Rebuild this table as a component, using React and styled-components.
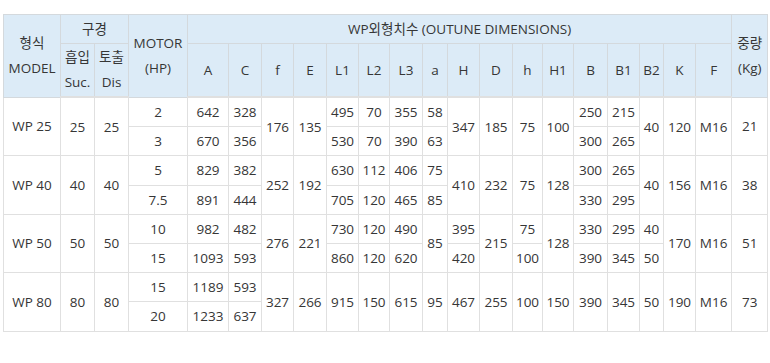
import React from "react";
import styled, { createGlobalStyle } from "styled-components";

const Global = createGlobalStyle`
  html, body { margin: 0; padding: 0; background: #fff; }
  body { font-family: "Open Sans", "Noto Sans CJK KR", sans-serif; color: #363636; }
`;

const Wrap = styled.div`
  padding: 14px 3px 0 3px;
`;

const Table = styled.table`
  border-collapse: collapse;
  table-layout: fixed;
  width: 764px;
  font-size: 13.5px;
  font-family: "Open Sans", "Noto Sans CJK KR", sans-serif;
  color: #363636;
`;

const Th = styled.th`
  background: #dcebf7;
  font-weight: 400;
  border: 1px solid #d4d9dd;
  text-align: center;
  vertical-align: middle;
  padding: 0;
  line-height: 25px;
  height: ${(p) => p.$h || "auto"};
  white-space: nowrap;
  font-family: "Open Sans", "Noto Sans CJK KR", sans-serif;
`;

const Td = styled.td`
  border: 1px solid #e0e0e0;
  text-align: center;
  vertical-align: middle;
  padding: 0;
  height: 28.2px;
  white-space: nowrap;
`;

const THead = styled.thead`
  tr:last-child th { border-bottom: 2px solid #e0e0e0; }
`;

const widths = [57, 34, 34, 59, 41, 33, 32, 33, 32, 31, 33, 25, 32, 33, 30, 31, 34, 32, 24, 32, 36, 36];
const dims = ["A", "C", "f", "E", "L1", "L2", "L3", "a", "H", "D", "h", "H1", "B", "B1", "B2", "K", "F"];

// cell spec: value, or [value, rowspan]
const body = [
  [["WP 25", 2], ["25", 2], ["25", 2], "2", "642", "328", ["176", 2], ["135", 2], "495", "70", "355", "58", ["347", 2], ["185", 2], ["75", 2], ["100", 2], "250", "215", ["40", 2], ["120", 2], ["M16", 2], ["21", 2]],
  ["3", "670", "356", "530", "70", "390", "63", "300", "265"],
  [["WP 40", 2], ["40", 2], ["40", 2], "5", "829", "382", ["252", 2], ["192", 2], "630", "112", "406", "75", ["410", 2], ["232", 2], ["75", 2], ["128", 2], "300", "265", ["40", 2], ["156", 2], ["M16", 2], ["38", 2]],
  ["7.5", "891", "444", "705", "120", "465", "85", "330", "295"],
  [["WP 50", 2], ["50", 2], ["50", 2], "10", "982", "482", ["276", 2], ["221", 2], "730", "120", "490", ["85", 2], "395", ["215", 2], "75", ["128", 2], "330", "295", "40", ["170", 2], ["M16", 2], ["51", 2]],
  ["15", "1093", "593", "860", "120", "620", "420", "100", "390", "345", "50"],
  [["WP 80", 2], ["80", 2], ["80", 2], "15", "1189", "593", ["327", 2], ["266", 2], ["915", 2], ["150", 2], ["615", 2], ["95", 2], ["467", 2], ["255", 2], ["100", 2], ["150", 2], ["390", 2], ["345", 2], ["50", 2], ["190", 2], ["M16", 2], ["73", 2]],
  ["20", "1233", "637"],
];

export default function App() {
  return (
    <>
      <Global />
      <Wrap>
        <Table>
          <colgroup>
            {widths.map((w, i) => (
              <col key={i} style={{ width: w }} />
            ))}
          </colgroup>
          <THead>
            <tr>
              <Th rowSpan={2}>형식<br />MODEL</Th>
              <Th colSpan={2} $h="28px">구경</Th>
              <Th rowSpan={2}>MOTOR<br />(HP)</Th>
              <Th colSpan={17}>WP외형치수 (OUTUNE DIMENSIONS)</Th>
              <Th rowSpan={2}>중량<br />(Kg)</Th>
            </tr>
            <tr>
              <Th $h="52px">흡입<br />Suc.</Th>
              <Th>토출<br />Dis</Th>
              {dims.map((d) => (
                <Th key={d}>{d}</Th>
              ))}
            </tr>
          </THead>
          <tbody>
            {body.map((row, r) => (
              <tr key={r}>
                {row.map((c, i) =>
                  Array.isArray(c) ? (
                    <Td key={i} rowSpan={c[1]}>{c[0]}</Td>
                  ) : (
                    <Td key={i}>{c}</Td>
                  )
                )}
              </tr>
            ))}
          </tbody>
        </Table>
      </Wrap>
    </>
  );
}
